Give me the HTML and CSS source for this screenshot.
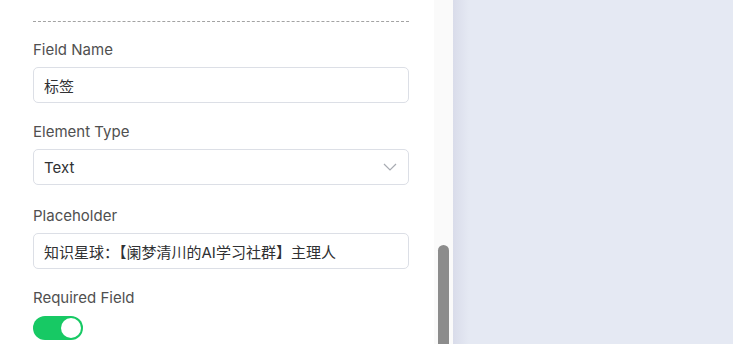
FILE: index.html
```html
<!DOCTYPE html>
<html lang="zh-CN">
<head>
<meta charset="utf-8">
<link rel="stylesheet" href="styles.css">
</head>
<body>
<div class="layout">
  <aside class="panel">
    <div class="divider"></div>
    <div class="form-item">
      <label class="label">Field Name</label>
      <div class="input">标签</div>
    </div>
    <div class="form-item select-item">
      <label class="label">Element Type</label>
      <div class="input select">
        <span>Text</span>
        <svg class="chevron" width="14" height="8" viewBox="0 0 14 8"><path d="M1 1 L7 7 L13 1" fill="none" stroke="#a8abb2" stroke-width="1.2"/></svg>
      </div>
    </div>
    <div class="form-item">
      <label class="label">Placeholder</label>
      <div class="input">知识星球：【阑梦清川的AI学习社群】主理人</div>
    </div>
    <div class="form-item switch-item">
      <label class="label">Required Field</label>
      <div class="switch"><span class="knob"></span></div>
    </div>
  </aside>
  <div class="scrollbar"><div class="thumb"></div></div>
  <main class="canvas"></main>
</div>
</body>
</html>
```
FILE: styles.css
```css
* { box-sizing: border-box; }
html, body { margin: 0; padding: 0; }
body {
  font-family: Inter, "Noto Sans CJK SC", sans-serif;
  font-size: 15px;
  background: #fff;
}
.layout {
  display: flex;
  height: 344px;
  overflow: hidden;
}
.panel {
  width: 434px;
  flex: none;
  padding: 21px 25px 0 33px;
  background: #fff;
  overflow: hidden;
}
.divider {
  border-top: 1px dashed #a3a3a3;
  margin-bottom: 17px;
}
.form-item {
  display: flex;
  flex-direction: column;
  margin-bottom: 18px;
}
.select-item { margin-bottom: 20px; }
.label {
  line-height: 22px;
  color: #505050;
  margin-bottom: 6px;
}
.switch-item .label { margin-bottom: 7px; }
.input {
  height: 36px;
  border: 1px solid #dcdfe6;
  border-radius: 5px;
  padding: 0 10px;
  display: flex;
  align-items: center;
  color: #303133;
  font-family: Inter, "Noto Sans CJK SC", sans-serif;
}
.select {
  justify-content: space-between;
}
.chevron { margin-right: 1px; }
.switch {
  width: 50px;
  height: 24px;
  border-radius: 12px;
  background: #17c964;
  display: flex;
  align-items: center;
  justify-content: flex-end;
  padding-right: 2px;
}
.knob {
  width: 20px;
  height: 20px;
  border-radius: 50%;
  background: #fff;
}
.scrollbar {
  width: 19px;
  flex: none;
  background: #fafafa;
  padding: 245px 4px 0 4px;
}
.thumb {
  height: 120px;
  width: 11px;
  background: #8c8c8c;
  border-radius: 6px 6px 0 0;
}
.canvas {
  flex: 1;
  background: linear-gradient(to right, #d9dcea 0, #e5e9f3 16px, #e5e9f3 100%);
}
```
